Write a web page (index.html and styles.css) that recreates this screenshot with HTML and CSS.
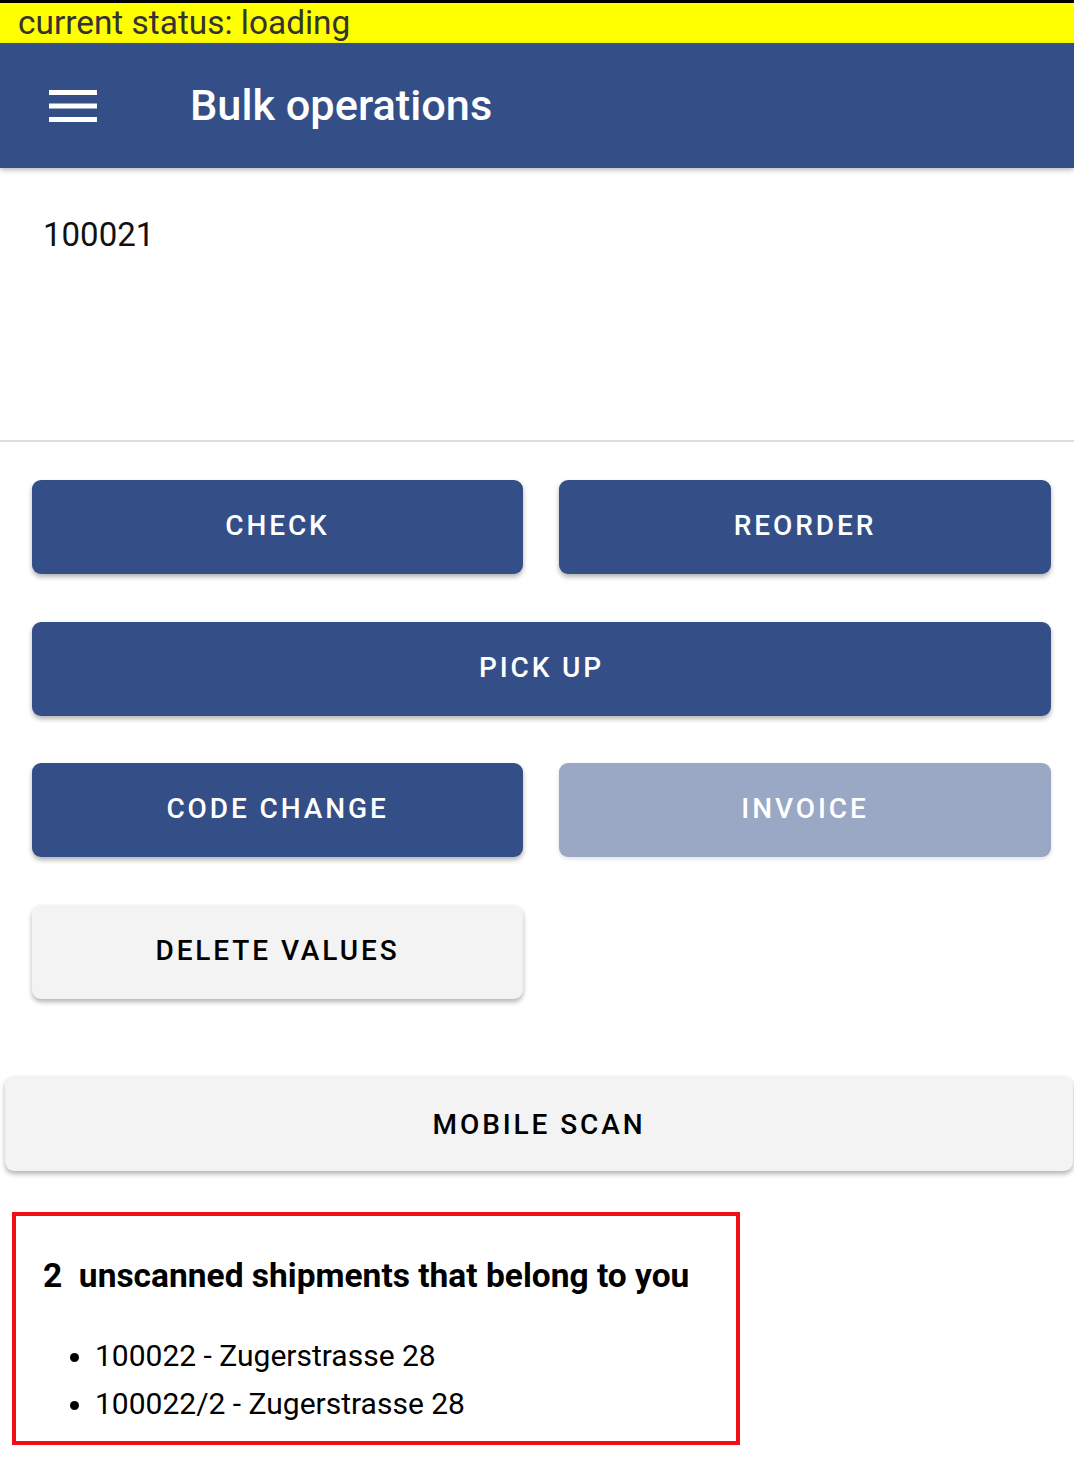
FILE: index.html
```html
<!DOCTYPE html>
<html lang="en">
    <head>
        <meta charset="utf-8"/>
        <title>Bulk operations</title>
        <link rel="stylesheet" href="styles.css">
    </head>
    <body>
        <!-- Status line -->
        <div class="status">current status: loading</div>

        <!-- App bar -->
        <div class="appbar">
            <svg class="menu" width="48" height="34" viewBox="0 0 48 34">
                <rect x="0" y="1" width="48" height="5" fill="#fff"/>
                <rect x="0" y="14.5" width="48" height="5" fill="#fff"/>
                <rect x="0" y="28" width="48" height="5" fill="#fff"/>
            </svg>
            <h1 class="title">Bulk operations</h1>
        </div>

        <!-- Scanned values -->
        <div class="field">
            <div class="value">100021</div>
        </div>

        <!-- Actions -->
        <div class="actions">
            <button class="btn">Check</button>
            <button class="btn">Reorder</button>
            <button class="btn wide">Pick up</button>
            <button class="btn">Code change</button>
            <button class="btn disabled">Invoice</button>
            <button class="btn light">Delete values</button>
        </div>

        <button class="btn light scan">Mobile scan</button>

        <!-- Unscanned list -->
        <div class="unscanned">
            <h2>2&nbsp; unscanned shipments that belong to you</h2>
            <ul>
                <li>100022 - Zugerstrasse 28</li>
                <li>100022/2 - Zugerstrasse 28</li>
            </ul>
        </div>
    </body>
</html>
```

FILE: styles.css
```css
body {
    margin: 0;
    background-color: #fff;
    font-family: Roboto, "Liberation Sans", sans-serif;
    overflow: hidden;
}

.status {
    border-top: 3px solid #000;
    background-color: #ffff00;
    color: #333;
    height: 40px;
    line-height: 40px;
    font-size: 33.4px;
    padding-left: 18px;
}

.appbar {
    background-color: #344f87;
    height: 125px;
    display: flex;
    align-items: center;
    padding-left: 49px;
    box-shadow: 0 2px 5px rgba(0, 0, 0, 0.28);
    position: relative;
}

.title {
    color: #fff;
    font-size: 43.3px;
    font-weight: 500;
    margin: 0 0 0 93px;
}

.field {
    height: 274px;
    border-bottom: 2px solid #dedede;
    padding: 47px 0 0 43px;
    box-sizing: border-box;
}

.value {
    font-size: 33px;
    color: #111;
}

.actions {
    display: grid;
    grid-template-columns: 491px 492px;
    column-gap: 36px;
    row-gap: 47.5px;
    padding: 38px 0 0 32px;
}

.btn {
    height: 94px;
    border: none;
    border-radius: 9px;
    padding: 0 0 3px 0;
    background-color: #344f87;
    color: #fff;
    font-family: Roboto, "Liberation Sans", sans-serif;
    font-size: 28px;
    font-weight: 500;
    letter-spacing: 2.9px;
    text-transform: uppercase;
    box-shadow: 0 3px 5px rgba(0, 0, 0, 0.3);
}

.wide {
    grid-column: 1 / 3;
}

.disabled {
    background-color: #9aa8c5;
    box-shadow: 0 2px 4px rgba(0, 0, 0, 0.12);
}

.light {
    background-color: #f3f3f3;
    color: #000;
}

.scan {
    display: block;
    width: 1068px;
    height: 95px;
    padding: 2px 0 0 0;
    margin: 77px 0 0 5px;
}

.unscanned {
    margin: 41px 0 0 12px;
    width: 728px;
    height: 233px;
    box-sizing: border-box;
    border: 4px solid #f20d18;
    padding: 40px 0 0 27px;
}

.unscanned h2 {
    font-size: 33.5px;
    font-weight: 700;
    margin: 0;
    line-height: 40px;
}

.unscanned ul {
    margin: 36px 0 0 0;
    padding-left: 52px;
    font-size: 30px;
}

.unscanned li {
    line-height: 48px;
}
```
